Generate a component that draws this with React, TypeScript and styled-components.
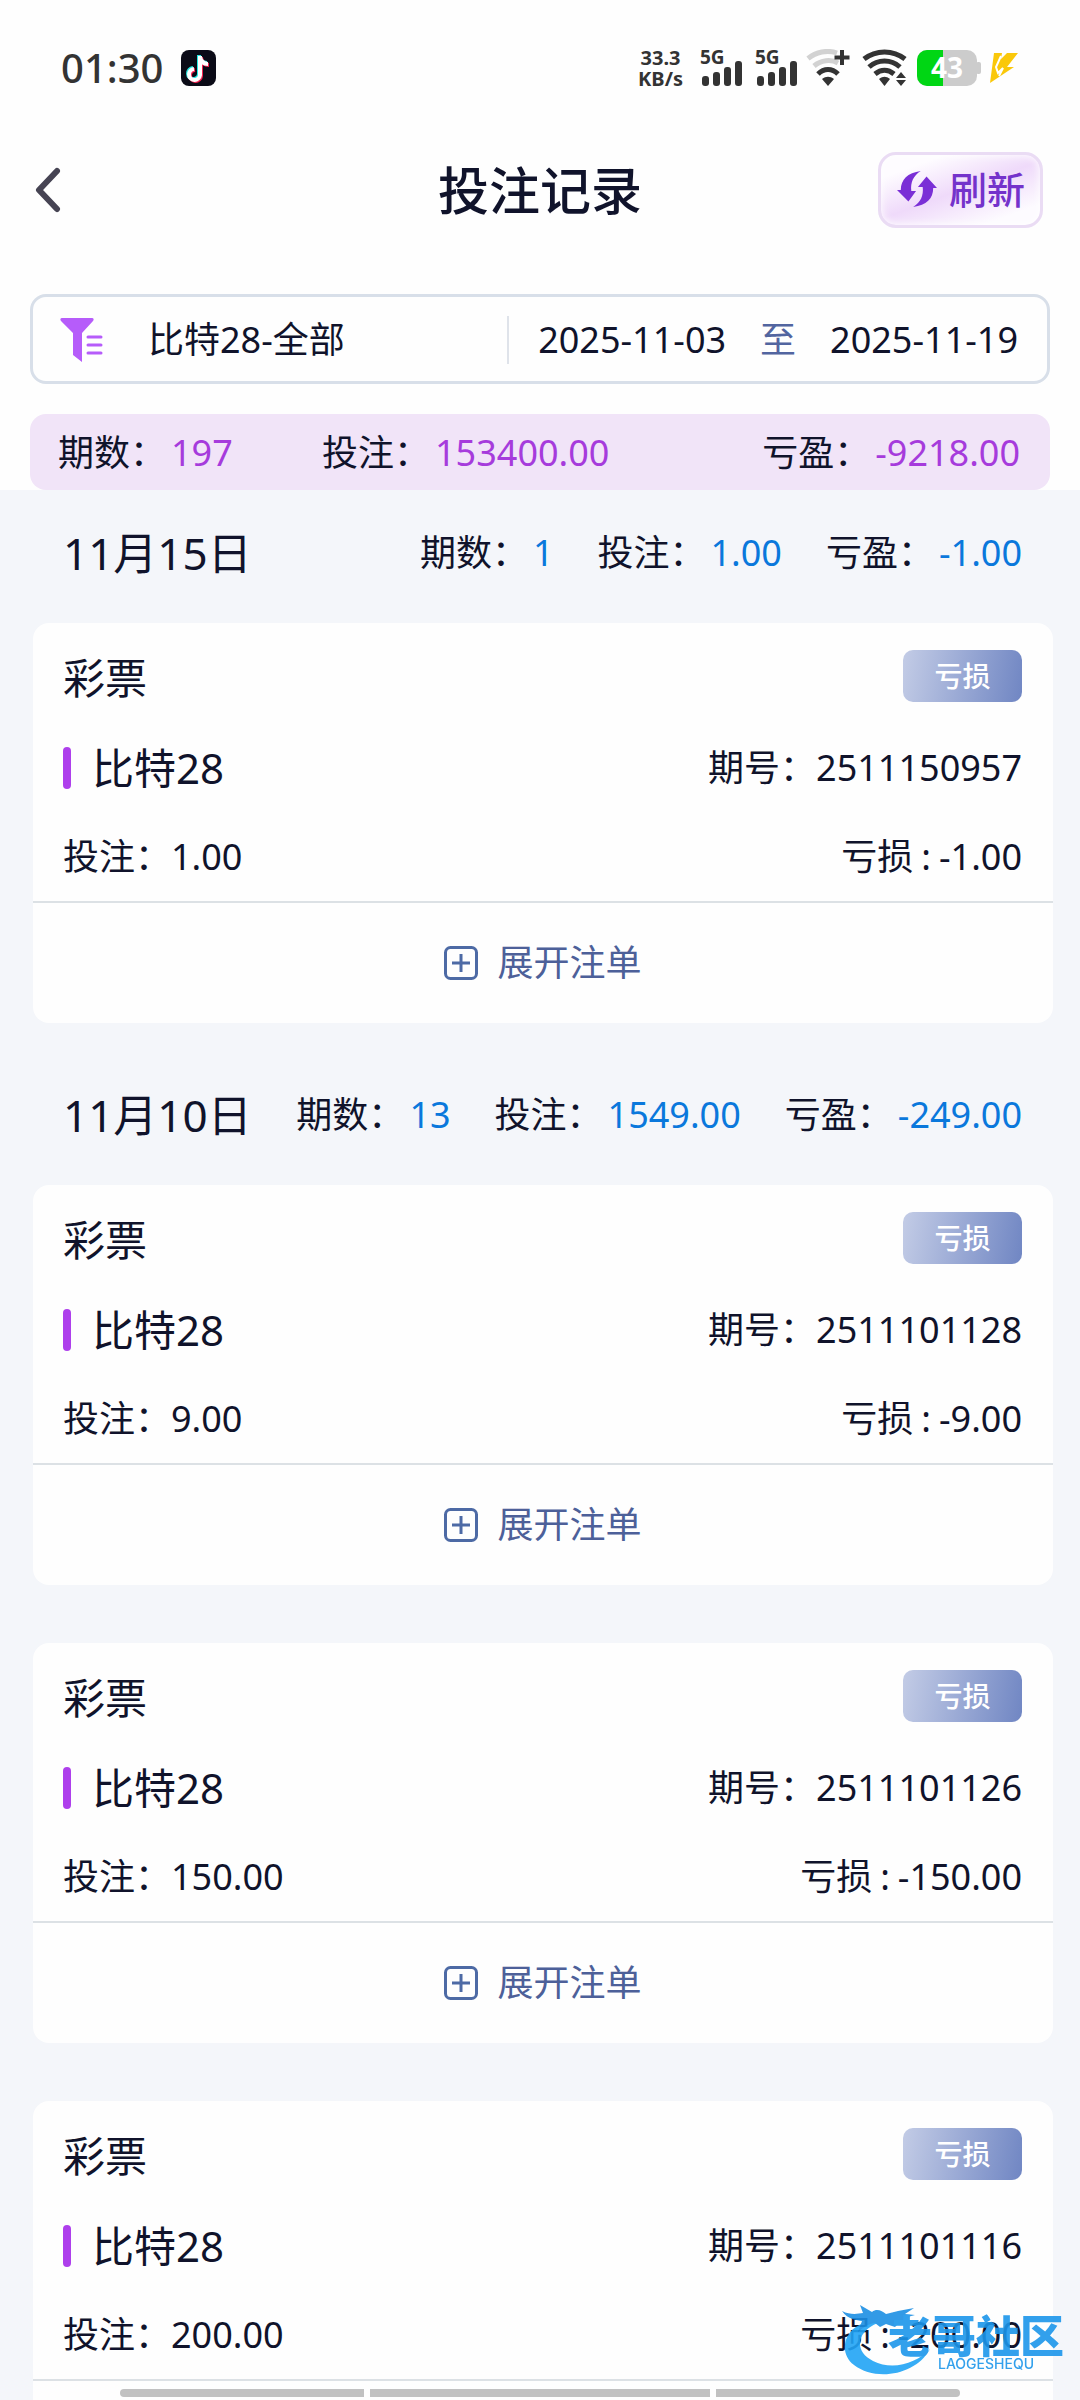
import React from 'react';
import styled, { createGlobalStyle } from 'styled-components';

const GlobalStyle = createGlobalStyle`
  *, *::before, *::after { box-sizing: border-box; }
  body { margin: 0; background: #f4f6fa; }
  button, input, select { font: inherit; color: inherit; }
`;

const Screen = styled.div`
  position: relative;
  display: flex;
  flex-direction: column;
  height: 100vh;
  overflow: hidden;
  color: #10132b;
  font-family: 'Noto Sans', 'Noto Sans CJK SC', sans-serif;
  font-size: 36px;
  line-height: 48px;
`;

const Top = styled.div`
  flex: none;
  background: #fefefe;
`;

const StatusBar = styled.div`
  display: flex;
  align-items: center;
  height: 90px;
  padding: 46px 53px 0 61px;
  color: #333;
`;

const Clock = styled.span`
  font-size: 40px;
  font-weight: 500;
  line-height: 44px;
`;

const StatusIcons = styled.div`
  display: flex;
  align-items: center;
  margin-left: auto;
`;

const IconPair = styled.div<{ $gap: number }>`
  display: flex;
  align-items: center;
  gap: ${(p) => p.$gap}px;
  margin-right: 8px;
`;

const NetSpeed = styled.div`
  margin-right: 17px;
  font-size: 20px;
  font-weight: 700;
  line-height: 21px;
  text-align: center;
`;

const AppBadge = styled.svg`
  width: 35px;
  height: 36px;
  margin-left: 18px;
`;

const TitleBar = styled.header`
  display: grid;
  grid-template-columns: 1fr auto 1fr;
  align-items: center;
  height: 204px;
  padding: 0 37px 4px;
`;

const BackButton = styled.button`
  justify-self: start;
  display: flex;
  margin-left: -8px;
  padding: 0;
  border: 0;
  background: none;
`;

const Title = styled.h1`
  margin: 0;
  font-size: 51px;
  font-weight: 500;
  line-height: 60px;
`;

const RefreshButton = styled.button`
  justify-self: end;
  display: flex;
  align-items: center;
  gap: 12px;
  height: 76px;
  padding: 0 15px 2px 16px;
  border: 3px solid #eadcf4;
  border-radius: 18px;
  background: linear-gradient(160deg, #fefcff 18%, #efdafa 50%, #fdfbff 84%);
  box-shadow: inset 0 0 8px #fff;
  color: #7432cb;
  font-size: 38px;
  font-weight: 500;
`;

const FilterBar = styled.form`
  display: flex;
  align-items: center;
  height: 90px;
  margin: 0 30px;
  padding: 2px 29px 0 26px;
  border: 3px solid #d8dfe9;
  border-radius: 16px;
`;

const GamePicker = styled.button`
  display: flex;
  flex: 1;
  align-items: center;
  gap: 45px;
  padding: 0;
  border: 0;
  background: none;
  text-align: left;
`;

const DateRange = styled.div`
  display: flex;
  align-items: center;
  gap: 34px;
  padding-left: 29px;
  border-left: 2px solid #dfe3ea;
`;

const DateButton = styled.button`
  padding: 0;
  border: 0;
  background: none;
`;

const To = styled.span`
  color: #5265a0;
`;

const Summary = styled.dl`
  display: grid;
  grid-template-columns: 264px 1fr auto;
  align-items: center;
  height: 76px;
  margin: 30px 30px 0;
  padding: 2px 30px 0 28px;
  border-radius: 16px;
  background: #f1e4f8;
`;

const Stat = styled.div<{ $tone: string }>`
  display: flex;
  gap: 5px;
  dt { margin: 0; }
  dd { margin: 0; color: ${(p) => p.$tone}; }
`;

const List = styled.main`
  flex: 1;
  min-height: 0;
  overflow-y: auto;
  scrollbar-width: none;
  padding: 0 27px 0 33px;
  background: #f4f6fa;
`;

const Day = styled.section`
  margin-bottom: 29px;
`;

const DayHeader = styled.header`
  display: flex;
  align-items: center;
  justify-content: space-between;
  height: 133px;
  padding: 0 31px 7px 30px;
`;

const DayTitle = styled.h2`
  margin: 0;
  font-size: 44px;
  font-weight: 400;
`;

const DayStats = styled.dl`
  display: flex;
  gap: 44px;
  margin: 0;
`;

const Cards = styled.div`
  display: grid;
  gap: 58px;
`;

const Card = styled.article`
  padding-top: 10px;
  border-radius: 16px;
  background: #fefefe;
`;

const Row = styled.div`
  display: flex;
  align-items: center;
  justify-content: space-between;
  height: 90px;
  padding: 0 31px 0 30px;
`;

const LastRow = styled(Row)`
  height: 88px;
`;

const Kind = styled.span`
  font-size: 42px;
`;

const Game = styled.h3`
  display: flex;
  align-items: center;
  gap: 21px;
  margin: 0;
  font-size: 42px;
  font-weight: 400;
  &::before {
    content: '';
    width: 8px;
    height: 42px;
    border-radius: 4px;
    background: #ae3fec;
  }
`;

const Badge = styled.span`
  width: 119px;
  margin-bottom: 5px;
  border-radius: 10px;
  background: linear-gradient(100deg, #c3cce6, #7086c3);
  color: #fff;
  font-size: 28px;
  font-weight: 500;
  line-height: 52px;
  text-align: center;
`;

const Loss = styled.span`
  display: flex;
  gap: 8px;
`;

const ExpandButton = styled.button`
  display: flex;
  align-items: center;
  justify-content: center;
  gap: 19px;
  width: 100%;
  height: 122px;
  padding: 0;
  border: 0;
  border-top: 2px solid #dce1e5;
  background: none;
  color: #4d6099;
`;

const HomeIndicator = styled.div`
  position: absolute;
  right: 120px;
  bottom: 3px;
  left: 120px;
  display: grid;
  grid-template-columns: 244fr 340fr 244fr;
  gap: 6px;
  height: 8px;
  border-radius: 4px;
  overflow: hidden;
  span { background: #c1c1c1; }
`;

const Watermark = styled.div`
  position: absolute;
  right: 16px;
  bottom: 25px;
  display: flex;
  align-items: flex-end;
  color: #1c96ea;
  opacity: 0.9;
  pointer-events: none;
`;

const Wordmark = styled.div`
  display: flex;
  flex-direction: column;
  margin-left: -46px;
  font-size: 44px;
  font-weight: 900;
  line-height: 34px;
  small {
    padding-left: 50px;
    font-family: Inter, sans-serif;
    font-size: 14px;
    font-weight: 500;
    line-height: 22px;
  }
`;

const BatteryText = styled.text`
  font-family: 'Noto Sans', sans-serif;
  font-size: 28px;
  font-weight: 700;
`;

const SignalText = styled.text`
  font-family: 'Noto Sans', sans-serif;
  font-size: 19px;
  font-weight: 700;
`;

function Signal() {
  return (
    <svg width="43" height="46" viewBox="0 -4 43 46" fill="#333" aria-hidden="true">
      <SignalText x="0" y="15">5G</SignalText>
      <rect x="2" y="27" width="7" height="10" rx="3" />
      <rect x="13" y="23" width="7" height="14" rx="3" />
      <rect x="24" y="18" width="7" height="19" rx="3" />
      <rect x="35" y="12" width="7" height="25" rx="3" />
    </svg>
  );
}

function WifiPlus() {
  return (
    <svg width="44" height="38" viewBox="0 0 44 38" fill="none" strokeWidth="5" aria-hidden="true">
      <path d="M2 9.500C10 3 21 .5 31 4M8 17c7-6 17-7 24-3" stroke="#d2d2d2" />
      <path d="M12 25c6-6 14-6 20 0" stroke="#333" />
      <path d="M16 30c4-3 8-3 12 0l-6 7z" fill="#333" />
      <path d="M36 1v15M28.500 8.500h15" stroke="#333" strokeWidth="4" />
    </svg>
  );
}

function Wifi() {
  return (
    <svg width="46" height="38" viewBox="0 0 46 38" fill="none" stroke="#333" strokeWidth="5" aria-hidden="true">
      <path d="M2 10C14 .5 31 .5 43 10M7 18c9-8 22-8 31 0M13 25c6-5 13-5 19 0" />
      <path d="M17 30c4-3 7-3 11 0l-5.500 7z" fill="#333" stroke="none" />
      <path d="M34 29l5-6 5 6zM34 31l5 6 5-6z" fill="#333" stroke="none" />
    </svg>
  );
}

function Battery() {
  return (
    <svg width="66" height="38" viewBox="0 0 66 38" aria-hidden="true">
      <rect x="60" y="13" width="5" height="12" rx="2" fill="#ccc" />
      <rect x="1" y="1" width="60" height="36" rx="10" fill="#ccc" />
      <path d="M27 1H11A10 10 0 0 0 1 11v16a10 10 0 0 0 10 10h16z" fill="#00d614" />
      <BatteryText x="15" y="29" fill="#fff">43</BatteryText>
    </svg>
  );
}

function Bolt() {
  return (
    <svg width="30" height="32" viewBox="0 0 30 32" aria-hidden="true">
      <path d="M5 1h8l-1 6 6-6h11L18 15h7L1 31z" fill="#fac80a" />
      <path d="M12 4l-5 11 2 6 5-5-4 8" fill="none" stroke="#fff" strokeWidth="2" />
    </svg>
  );
}

function DragonLogo() {
  return (
    <svg width="92" height="70" viewBox="0 0 92 70" aria-hidden="true">
      <path
        d="M22 18C2 24-4 48 12 60c22 17 62 10 76-16-13 14-37 22-57 12C11 46 15 26 36 18z"
        fill="#22a5f5"
      />
      <path
        d="M0 6c8 4 15 3 21 2L18 0l12 7c5-4 10-1 14 2l12-3 16-3-9 6 10 1-11 3 8 5-12-1-5 5-9-3-6 3-5-4c-8 1-12 5-17 9l4-11C15 15 6 15 0 6z"
        fill="#1c8fe4"
      />
    </svg>
  );
}

function PlusBox() {
  return (
    <svg width="34" height="34" viewBox="0 0 34 34" fill="none" stroke="#4d6aa5" strokeWidth="3" aria-hidden="true">
      <rect x="1.500" y="1.500" width="31" height="31" rx="5" />
      <path d="M8 17h18M17 8v18" />
    </svg>
  );
}

const PURPLE = '#a63bdc';
const BLUE = '#0a78dc';

type StatData = [label: string, value: string];

type Bet = { id: string; stake: string; result: string };

const summary: StatData[] = [['期数：', '197'], ['投注：', '153400.00'], ['亏盈：', '-9218.00']];

const days: { date: string; stats: StatData[]; bets: Bet[] }[] = [
  {
    date: '11月15日',
    stats: [['期数：', '1'], ['投注：', '1.00'], ['亏盈：', '-1.00']],
    bets: [{ id: '2511150957', stake: '1.00', result: '-1.00' }],
  },
  {
    date: '11月10日',
    stats: [['期数：', '13'], ['投注：', '1549.00'], ['亏盈：', '-249.00']],
    bets: [
      { id: '2511101128', stake: '9.00', result: '-9.00' },
      { id: '2511101126', stake: '150.00', result: '-150.00' },
      { id: '2511101116', stake: '200.00', result: '-200.00' },
    ],
  },
];

function Stats({ items, tone }: { items: StatData[]; tone: string }) {
  return (
    <>
      {items.map(([label, value]) => (
        <Stat key={label} $tone={tone}>
          <dt>{label}</dt>
          <dd>{value}</dd>
        </Stat>
      ))}
    </>
  );
}

function BetCard({ bet }: { bet: Bet }) {
  return (
    <Card>
      <Row>
        <Kind>彩票</Kind>
        <Badge>亏损</Badge>
      </Row>
      <Row>
        <Game>比特28</Game>
        <span>期号：{bet.id}</span>
      </Row>
      <LastRow>
        <span>投注：{bet.stake}</span>
        <Loss>
          <span>亏损</span>
          <span>:</span>
          <span>{bet.result}</span>
        </Loss>
      </LastRow>
      <ExpandButton type="button">
        <PlusBox />
        展开注单
      </ExpandButton>
    </Card>
  );
}

export default function App() {
  return (
    <Screen lang="zh-CN">
      <GlobalStyle />
      <Top>
        <StatusBar>
          <Clock>01:30</Clock>
          <AppBadge viewBox="0 0 35 36" aria-hidden="true">
            <rect width="35" height="36" rx="8" fill="#0b0b17" />
            <g fill="none" strokeWidth="4">
              <path d="M18 5v19a5.500 5.500 0 1 1-6-6M18 6c1 5 4 7 8 7" stroke="#25e8e2" />
              <path d="M20 7v19a5.500 5.500 0 1 1-6-6M20 8c1 5 4 7 8 7" stroke="#f5214f" />
              <path d="M19 6v19a5.500 5.500 0 1 1-6-6M19 7c1 5 4 7 8 7" stroke="#fff" />
            </g>
          </AppBadge>
          <StatusIcons>
            <NetSpeed>33.3<br />KB/s</NetSpeed>
            <IconPair $gap={12}>
              <Signal />
              <Signal />
            </IconPair>
            <IconPair $gap={12}>
              <WifiPlus />
              <Wifi />
            </IconPair>
            <IconPair $gap={7}>
              <Battery />
              <Bolt />
            </IconPair>
          </StatusIcons>
        </StatusBar>
        <TitleBar>
          <BackButton type="button" aria-label="返回">
            <svg width="36" height="46" viewBox="0 0 36 46" fill="none" stroke="#464453" strokeWidth="6" strokeLinecap="round" strokeLinejoin="round">
              <path d="M28 4L10 23l18 19" />
            </svg>
          </BackButton>
          <Title>投注记录</Title>
          <RefreshButton type="button">
            <svg width="40" height="38" viewBox="0 0 42 38" fill="#7a2fd6" aria-hidden="true">
              <path d="M25 0C11 2 4 9 4 20H0l12 12 8-11h-5C14 12 17 5 25 0z" />
              <path d="M17 38c14-2 21-9 21-20h4L31 6l-9 11h5c1 9-2 16-10 21z" />
            </svg>
            刷新
          </RefreshButton>
        </TitleBar>
        <FilterBar>
          <GamePicker type="button">
            <svg width="44" height="46" viewBox="0 0 44 46" fill="#b65cfa" aria-hidden="true">
              <path d="M3 1h30c2 0 2 2 1 3L23 16v29l-9-7V16L2 4C1 3 1 1 3 1z" />
              <path d="M29 20h13M29 28h13M29 36h13" stroke="#b65cfa" strokeWidth="3" strokeLinecap="round" />
            </svg>
            比特28-全部
          </GamePicker>
          <DateRange>
            <DateButton type="button">2025-11-03</DateButton>
            <To>至</To>
            <DateButton type="button">2025-11-19</DateButton>
          </DateRange>
        </FilterBar>
        <Summary>
          <Stats items={summary} tone={PURPLE} />
        </Summary>
      </Top>
      <List>
        {days.map((day) => (
          <Day key={day.date}>
            <DayHeader>
              <DayTitle>{day.date}</DayTitle>
              <DayStats>
                <Stats items={day.stats} tone={BLUE} />
              </DayStats>
            </DayHeader>
            <Cards>
              {day.bets.map((bet) => (
                <BetCard key={bet.id} bet={bet} />
              ))}
            </Cards>
          </Day>
        ))}
      </List>
      <Watermark>
        <DragonLogo />
        <Wordmark>
          老哥社区
          <small>LAOGESHEQU</small>
        </Wordmark>
      </Watermark>
      <HomeIndicator>
        <span />
        <span />
        <span />
      </HomeIndicator>
    </Screen>
  );
}
